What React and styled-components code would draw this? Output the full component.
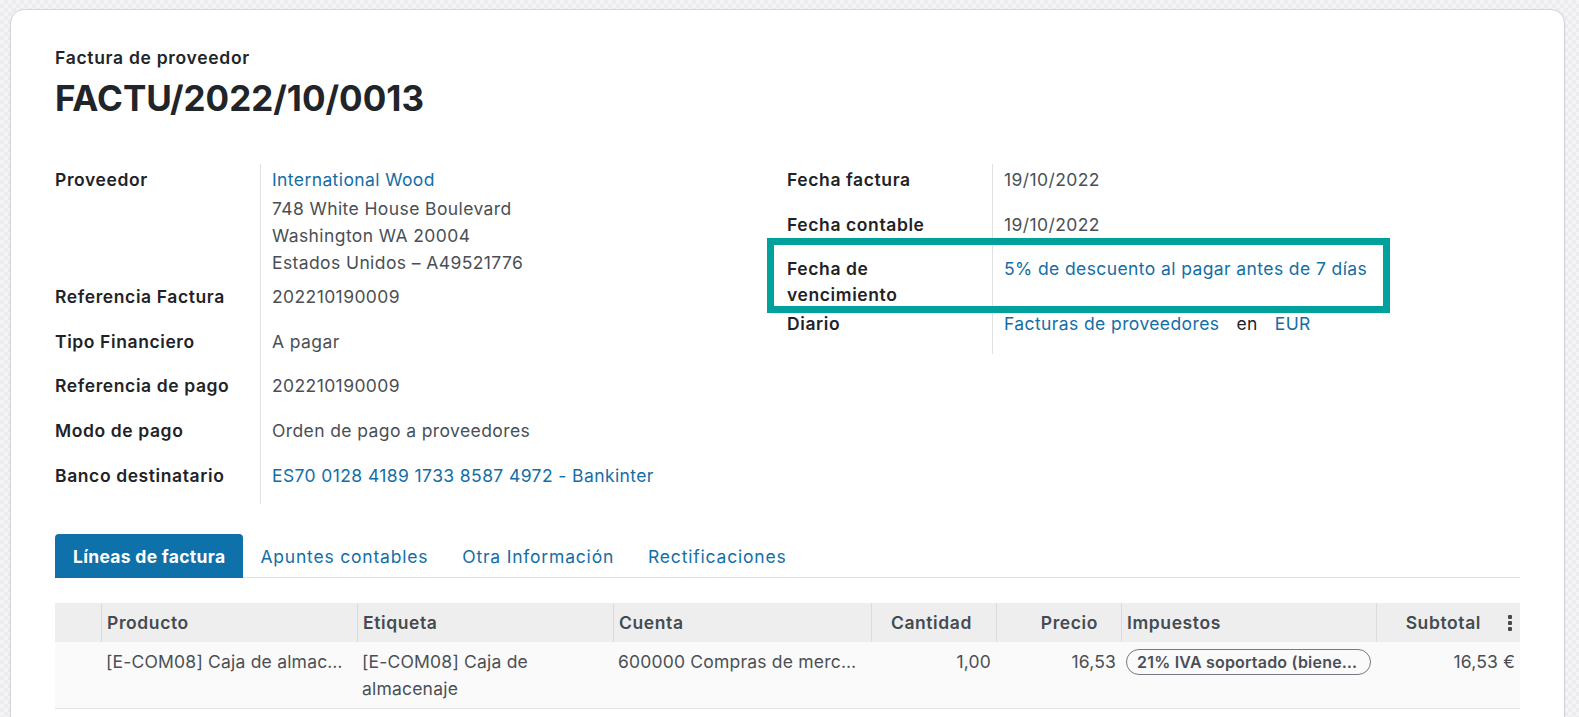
import React from 'react';
import styled, { createGlobalStyle } from 'styled-components';

const GlobalStyle = createGlobalStyle`
  html, body {
    margin: 0;
    padding: 0;
  }
  body {
    font-family: Inter, "Open Sans", sans-serif;
    background-color: #f4f4f6;
    background-image: conic-gradient(#ececef 25%, transparent 0 50%, #ececef 0 75%, transparent 0);
    background-size: 8px 8px;
    color: #212529;
    overflow: hidden;
  }
`;

const Page = styled.div`
  padding: 9px 14px 0 10px;
  height: 717px;
  box-sizing: border-box;
`;

const Card = styled.div`
  background: #fff;
  border: 1px solid #d3d3dd;
  border-radius: 14px;
  box-shadow: 0 1px 3px rgba(0, 0, 0, 0.05);
  padding: 36px 44px 0 44px;
  height: 760px;
  box-sizing: border-box;
`;

const Subtitle = styled.div`
  font-size: 17.5px;
  font-weight: 600;
  line-height: 24px;
  letter-spacing: 0.7px;
`;

const Title = styled.h1`
  margin: 6px 0 0;
  font-size: 35px;
  font-weight: 700;
  line-height: 44px;
  letter-spacing: 0;
`;

const Groups = styled.div`
  display: grid;
  grid-template-columns: 732px 1fr;
  margin-top: 44px;
`;

const Group = styled.div`
  position: relative;
`;

const Row = styled.div`
  display: grid;
  grid-template-columns: 205px 1fr;
`;

const Label = styled.div`
  font-size: 17.5px;
  font-weight: 600;
  line-height: 26px;
  letter-spacing: 0.6px;
  padding: 3px 0 ${p => p.$pb ?? 15.7}px;
  color: #1f2327;
`;

const Value = styled.div`
  border-left: 1px solid #dfe1e4;
  padding: 3px 0 0 11px;
  font-size: 17.5px;
  line-height: 26px;
  color: #4a4f55;
  letter-spacing: 0.4px;
`;

const Link = styled.span`
  color: #136ea6;
`;

const Address = styled.div`
  margin: 2px 0 5px;
  line-height: 27px;
`;

const Plain = styled.span`
  color: #212529;
  margin: 0 17px;
`;

const Highlight = styled.div`
  position: absolute;
  left: -20px;
  top: 74px;
  width: 623px;
  height: 75px;
  border: 7px solid #00a09d;
  box-sizing: border-box;
  pointer-events: none;
`;

const Tabs = styled.div`
  display: flex;
  margin-top: 30px;
  border-bottom: 1px solid #dee2e6;
`;

const Tab = styled.div`
  height: 44px;
  display: flex;
  align-items: center;
  padding: 0 ${p => (p.$active ? 18 : 17)}px;
  font-size: 17.5px;
  letter-spacing: ${p => (p.$active ? 0.3 : 0.8)}px;
  margin-bottom: -1px;
  border-radius: 4px 4px 0 0;
  color: ${p => (p.$active ? '#fff' : '#136ea6')};
  background: ${p => (p.$active ? '#0e71a9' : 'transparent')};
  font-weight: ${p => (p.$active ? 700 : 400)};
`;

const cols = '46px 256px 256px 258px 125px 125px 255px 1fr';

const HeadRow = styled.div`
  display: grid;
  grid-template-columns: ${cols};
  margin-top: 25px;
  background: #eeeeee;
  height: 39px;
`;

const HeadCell = styled.div`
  display: flex;
  align-items: center;
  justify-content: ${p => (p.$right ? 'flex-end' : 'flex-start')};
  padding: 0 ${p => p.$pr ?? 6}px 0 5px;
  border-left: ${p => (p.$first ? 'none' : '1px solid #dcdcdc')};
  font-size: 17.5px;
  font-weight: 600;
  letter-spacing: 0.6px;
  color: #454b51;
  position: relative;
  white-space: nowrap;
`;

const Kebab = styled.span`
  position: absolute;
  right: 8px;
  top: 12px;
  display: flex;
  flex-direction: column;
  gap: 2px;
  span {
    width: 4px;
    height: 4px;
    border-radius: 1px;
    background: #454b51;
  }
`;

const BodyRow = styled.div`
  display: grid;
  grid-template-columns: ${cols};
  background: #fafafa;
  border-bottom: 1px solid #e4e4e6;
  min-height: 64px;
`;

const Cell = styled.div`
  padding: 6px 5px 6px 5px;
  font-size: 17.5px;
  line-height: 27px;
  color: #4a4f55;
  letter-spacing: 0.2px;
  text-align: ${p => (p.$right ? 'right' : 'left')};
  overflow: hidden;
  white-space: ${p => (p.$wrap ? 'normal' : 'nowrap')};
  text-overflow: ellipsis;
`;

const Badge = styled.span`
  display: inline-block;
  max-width: 100%;
  box-sizing: border-box;
  margin-top: 1px;
  padding: 0 10px;
  border: 1px solid #767b81;
  border-radius: 13px;
  font-size: 16px;
  font-weight: 600;
  line-height: 24px;
  color: #4a4f55;
  letter-spacing: 0.2px;
  white-space: nowrap;
  overflow: hidden;
  text-overflow: ellipsis;
  vertical-align: top;
`;

const App = () => {
  return (
    <>
      <GlobalStyle />
      <Page>
        <Card>
          <Subtitle>Factura de proveedor</Subtitle>
          <Title>FACTU/2022/10/0013</Title>

          <Groups>
            <Group>
              <Row>
                <Label $pb={10}>Proveedor</Label>
                <Value>
                  <Link>International Wood</Link>
                  <Address>
                    748 White House Boulevard
                    <br />
                    Washington WA 20004
                    <br />
                    Estados Unidos – A49521776
                  </Address>
                </Value>
              </Row>
              <Row>
                <Label>Referencia Factura</Label>
                <Value>202210190009</Value>
              </Row>
              <Row>
                <Label>Tipo Financiero</Label>
                <Value>A pagar</Value>
              </Row>
              <Row>
                <Label>Referencia de pago</Label>
                <Value>202210190009</Value>
              </Row>
              <Row>
                <Label>Modo de pago</Label>
                <Value>Orden de pago a proveedores</Value>
              </Row>
              <Row>
                <Label>Banco destinatario</Label>
                <Value>
                  <Link>ES70 0128 4189 1733 8587 4972 - Bankinter</Link>
                </Value>
              </Row>
            </Group>

            <Group>
              <Row>
                <Label>Fecha factura</Label>
                <Value>19/10/2022</Value>
              </Row>
              <Row>
                <Label>Fecha contable</Label>
                <Value>19/10/2022</Value>
              </Row>
              <Row>
                <Label $pb={0}>
                  Fecha de
                  <br />
                  vencimiento
                </Label>
                <Value>
                  <Link>5% de descuento al pagar antes de 7 días</Link>
                </Value>
              </Row>
              <Row>
                <Label $pb={17}>Diario</Label>
                <Value>
                  <Link>Facturas de proveedores</Link>
                  <Plain>en</Plain>
                  <Link>EUR</Link>
                </Value>
              </Row>
              <Highlight />
            </Group>
          </Groups>

          <Tabs>
            <Tab $active>Líneas de factura</Tab>
            <Tab>Apuntes contables</Tab>
            <Tab>Otra Información</Tab>
            <Tab>Rectificaciones</Tab>
          </Tabs>

          <HeadRow>
            <HeadCell $first />
            <HeadCell>Producto</HeadCell>
            <HeadCell>Etiqueta</HeadCell>
            <HeadCell>Cuenta</HeadCell>
            <HeadCell $right $pr={24}>Cantidad</HeadCell>
            <HeadCell $right $pr={23}>Precio</HeadCell>
            <HeadCell>Impuestos</HeadCell>
            <HeadCell $right $pr={39}>
              Subtotal
              <Kebab>
                <span />
                <span />
                <span />
              </Kebab>
            </HeadCell>
          </HeadRow>
          <BodyRow>
            <Cell />
            <Cell>[E-COM08] Caja de almacenaje</Cell>
            <Cell $wrap>[E-COM08] Caja de almacenaje</Cell>
            <Cell>600000 Compras de mercaderías</Cell>
            <Cell $right>1,00</Cell>
            <Cell $right>16,53</Cell>
            <Cell>
              <Badge>21% IVA soportado (bienes corrientes)</Badge>
            </Cell>
            <Cell $right>16,53 €</Cell>
          </BodyRow>
        </Card>
      </Page>
    </>
  );
};

export default App;
